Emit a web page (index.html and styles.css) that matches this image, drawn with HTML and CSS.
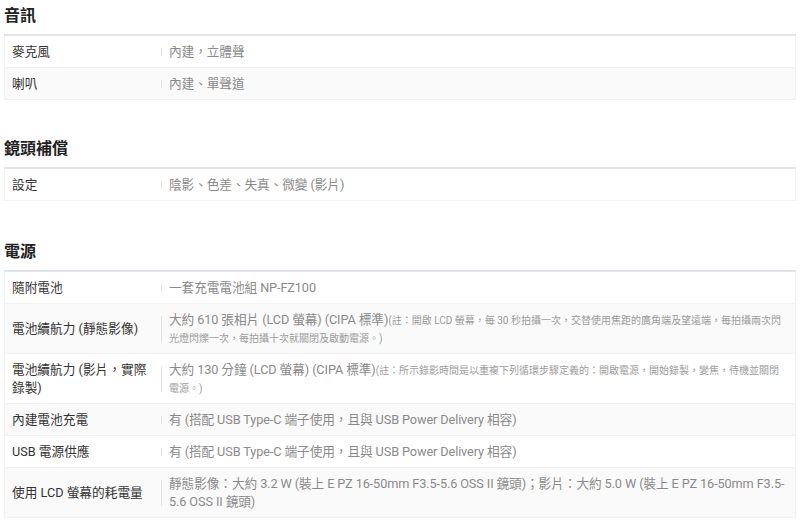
FILE: index.html
```html
<!DOCTYPE html>
<html lang="zh-TW">
<head>
<meta charset="utf-8">
<title>規格</title>
<link rel="stylesheet" href="styles.css">
</head>
<body>
<section class="spec-group first">
  <h2 class="group-title">音訊</h2>
  <div class="spec-table">
    <div class="spec-row"><div class="spec-label">麥克風</div><div class="spec-value"><div class="value-text">內建，立體聲</div></div></div>
    <div class="spec-row"><div class="spec-label">喇叭</div><div class="spec-value"><div class="value-text">內建、單聲道</div></div></div>
  </div>
</section>

<section class="spec-group">
  <h2 class="group-title">鏡頭補償</h2>
  <div class="spec-table">
    <div class="spec-row"><div class="spec-label">設定</div><div class="spec-value"><div class="value-text">陰影、色差、失真、微變 (影片)</div></div></div>
  </div>
</section>

<section class="spec-group">
  <h2 class="group-title">電源</h2>
  <div class="spec-table">
    <div class="spec-row"><div class="spec-label">隨附電池</div><div class="spec-value"><div class="value-text">一套充電電池組 NP-FZ100</div></div></div>
    <div class="spec-row"><div class="spec-label">電池續航力 (靜態影像)</div><div class="spec-value"><div class="value-text">大約 610 張相片 (LCD 螢幕) (CIPA 標準)<span class="note">(註：開啟 LCD 螢幕，每 30 秒拍攝一次，交替使用焦距的廣角端及望遠端，每拍攝兩次閃光燈閃爍一次，每拍攝十次就關閉及啟動電源。)</span></div></div></div>
    <div class="spec-row"><div class="spec-label">電池續航力 (影片，實際錄製)</div><div class="spec-value"><div class="value-text">大約 130 分鐘 (LCD 螢幕) (CIPA 標準)<span class="note">(註：所示錄影時間是以重複下列循環步驟定義的：開啟電源，開始錄製，變焦，待機並關閉電源。)</span></div></div></div>
    <div class="spec-row"><div class="spec-label">內建電池充電</div><div class="spec-value"><div class="value-text">有 (搭配 USB Type-C 端子使用，且與 USB Power Delivery 相容)</div></div></div>
    <div class="spec-row"><div class="spec-label">USB 電源供應</div><div class="spec-value"><div class="value-text">有 (搭配 USB Type-C 端子使用，且與 USB Power Delivery 相容)</div></div></div>
    <div class="spec-row"><div class="spec-label">使用 LCD 螢幕的耗電量</div><div class="spec-value"><div class="value-text">靜態影像：大約 3.2 W (裝上 E PZ 16-50mm F3.5-<wbr>5.6 OSS II 鏡頭)；影片：大約 5.0 W (裝上 E PZ 16-50mm F3.5-<wbr>5.6 OSS II 鏡頭)</div></div></div>
  </div>
</section>
</body>
</html>
```

FILE: styles.css
```css
html, body {
  margin: 0;
  padding: 0;
  background: #ffffff;
}

body {
  font-family: Roboto, "Noto Sans CJK TC", sans-serif;
  font-size: 12.7px;
  color: #333333;
  padding: 4px 4px 0 4px;
}

.spec-group {
  margin-top: 37px;
}

.spec-group.first {
  margin-top: 0;
}

.spec-group:last-child {
  margin-top: 39px;
}

.group-title {
  margin: 0 0 6px 0;
  font-size: 16px;
  line-height: 24px;
  font-weight: 700;
  color: #222222;
}

.spec-table {
  border-top: 2px solid #e2e4e9;
}

.spec-row {
  display: grid;
  grid-template-columns: 156px 1fr;
  align-items: center;
  border: 1px solid #f1f1f1;
  border-top: none;
  background: #ffffff;
}

.spec-row:nth-child(even) {
  background: #fafafa;
}

.spec-label {
  padding: 6.5px 8px 6.5px 7px;
  line-height: 18px;
  color: #333333;
}

.spec-value {
  padding: 6.5px 8px 6.5px 0;
  line-height: 18px;
}

.value-text {
  padding-left: 8px;
  color: #8a8a8a;
  letter-spacing: -0.1px;
  background: linear-gradient(#e4e4e4, #e4e4e4) left center / 1px calc(100% - 10px) no-repeat;
}

.note {
  font-size: 10px;
  line-height: 14px;
  letter-spacing: 0;
  color: #9c9c9c;
}
```
